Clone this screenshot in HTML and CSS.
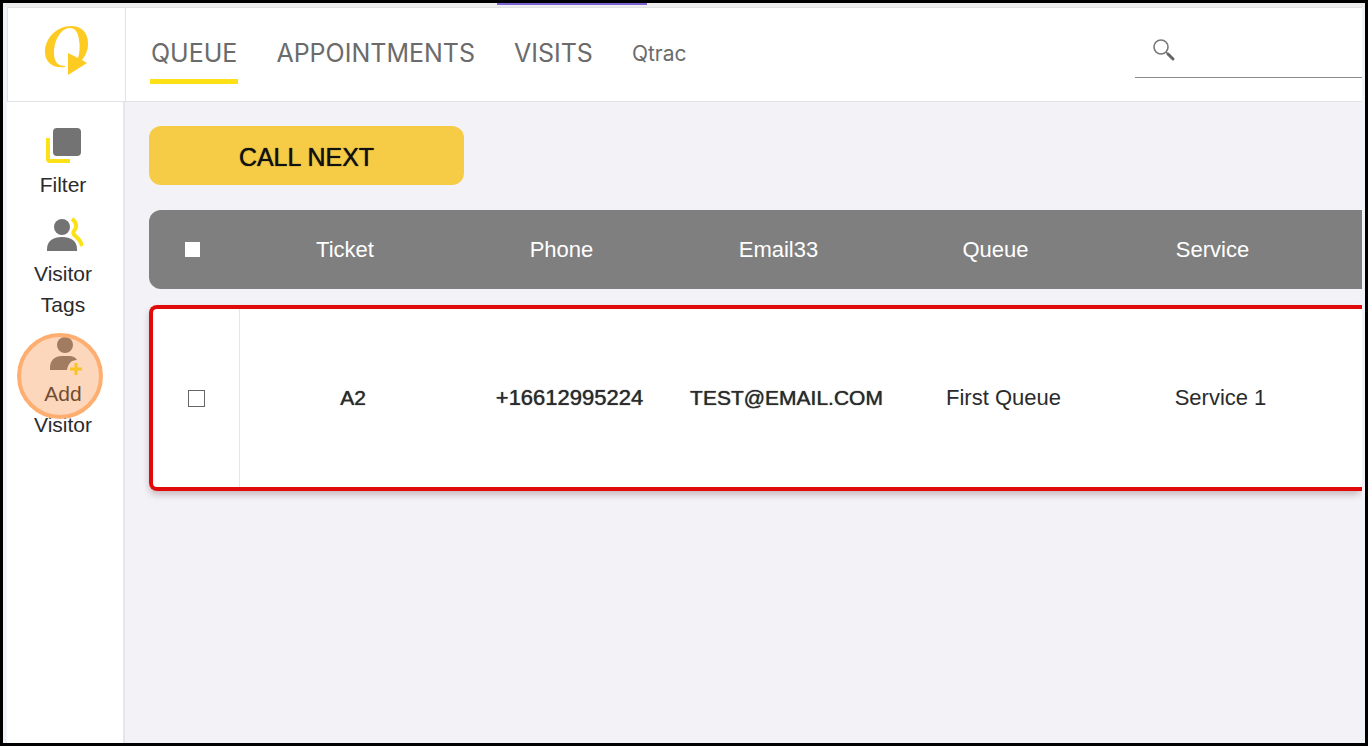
FILE: index.html
```html
<!DOCTYPE html>
<html lang="en">
<head>
    <meta charset="UTF-8">
    <meta name="viewport" content="width=device-width, initial-scale=1.0">
    <title>Queue</title>
    <link rel="stylesheet" href="styles.css">
</head>
<body>

    <div class="top-strip"><div class="tab-marker"></div></div>

    <header class="header">
        <a class="logo" href="#" aria-label="Home">
            <svg width="46" height="52" viewBox="0 0 46 52">
                <path fill="#fdcb22" d="M21 42C9 44 1 37 1 27C1 13 13 1 27 1C38 1 44 8 44 18C44 25 42 30 38 35L43 38L24 50V28L34 33C36 27 36 20 35 15C34 7 31 3 26 3C17 3 10 15 10 28C10 37 14 41 21 41Z"/>
            </svg>
        </a>
        <nav class="nav">
            <a class="nav-link active" href="#">QUEUE</a>
            <a class="nav-link" href="#">APPOINTMENTS</a>
            <a class="nav-link" href="#">VISITS</a>
            <a class="nav-link small" href="#">Qtrac</a>
        </nav>
        <form class="search">
            <svg width="24" height="24" viewBox="0 0 24 24">
                <circle cx="9" cy="9" r="7" fill="none" stroke="#777" stroke-width="1.6"/>
                <path d="M14 14L16 16" stroke="#777" stroke-width="1.5"/>
                <path d="M16 16L21 21" stroke="#666" stroke-width="3" stroke-linecap="round"/>
            </svg>
            <input type="search" aria-label="Search">
        </form>
    </header>

    <div class="page">
        <aside class="sidebar">
            <a class="side-item" href="#">
                <svg width="40" height="42" viewBox="0 0 40 42">
                    <path d="M5 11V32Q5 34 7 34H27" fill="none" stroke="#fbe116" stroke-width="4"/>
                    <rect x="10" y="1" width="28" height="28" rx="4" fill="#737373"/>
                </svg>
                <span>Filter</span>
            </a>
            <a class="side-item" href="#">
                <svg width="40" height="42" viewBox="0 0 40 42">
                    <path d="M29 3C34 6 34 12 31 15C28 20 37 20 39 30" fill="none" stroke="#fbe116" stroke-width="4"/>
                    <circle cx="19" cy="11" r="8" fill="#737373"/>
                    <path d="M4 35V33C4 25 10 21 19 21S34 25 34 33V35Z" fill="#737373"/>
                </svg>
                <span>Visitor Tags</span>
            </a>
            <a class="side-item" href="#">
                <svg width="40" height="42" viewBox="0 0 40 42">
                    <circle cx="22" cy="9" r="8" fill="#737373"/>
                    <path d="M7 34V32C7 24 12 20 19 20H26C30 20 32 21 34 24C28 24 25 28 24 34Z" fill="#737373"/>
                    <path d="M33 27V39M27 33H39" stroke="#fbe116" stroke-width="3"/>
                </svg>
                <span>Add Visitor</span>
                <i class="highlight"></i>
            </a>
        </aside>

        <main class="content">
            <button class="call-next" type="button">CALL NEXT</button>

            <table class="queue-table">
                <colgroup>
                    <col class="col-check">
                    <col class="col-ticket">
                    <col class="col-data">
                    <col class="col-data">
                    <col class="col-data">
                    <col class="col-data">
                    <col>
                </colgroup>
                <thead>
                    <tr>
                        <th class="check"><input type="checkbox" aria-label="Select all"></th>
                        <th class="ticket">Ticket</th>
                        <th>Phone</th>
                        <th>Email33</th>
                        <th>Queue</th>
                        <th>Service</th>
                        <th></th>
                    </tr>
                </thead>
                <tbody>
                    <tr>
                        <td class="check"><input type="checkbox" aria-label="Select A2"></td>
                        <td class="ticket"><strong>A2</strong></td>
                        <td><strong class="phone">+16612995224</strong></td>
                        <td><strong>TEST@EMAIL.COM</strong></td>
                        <td>First Queue</td>
                        <td>Service 1</td>
                        <td></td>
                    </tr>
                </tbody>
            </table>
        </main>
    </div>

</body>
</html>
```

FILE: styles.css
```css
* {
    box-sizing: border-box;
}
body {
    margin: 0;
    min-height: 100vh;
    display: flex;
    flex-direction: column;
    border: 3px solid #000;
    background-color: #f0f3f9;
    font-family: "Liberation Sans", Arial, sans-serif;
    font-size: 22px;
    color: #2b2b2b;
}
a {
    color: inherit;
    text-decoration: none;
}
.top-strip {
    height: 4px;
    background-color: #eeeeee;
}
.tab-marker {
    width: 11%;
    height: 2px;
    margin-left: 36.3%;
    background-color: #7d62d6;
}

/* Header */
.header {
    display: flex;
    height: 95px;
    margin: 0 3px 0 4px;
    border: 1px solid #e2e2e6;
    border-right: none;
    background-color: #fff;
}
.logo {
    display: flex;
    align-items: center;
    justify-content: center;
    width: 118px;
    padding-bottom: 8px;
    border-right: 1px solid #e2e2e6;
}
.nav {
    display: flex;
    flex: 1;
    align-items: flex-start;
    gap: 37px;
    padding: 28px 24px 0;
}
.nav-link {
    padding: 0 1px 9px;
    border-bottom: 5px solid transparent;
    font-family: Inter, "Liberation Sans", sans-serif;
    font-size: 25px;
    line-height: 34px;
    color: #6b6b6b;
}
.nav-link.active {
    border-bottom-color: #fbe116;
}
.nav-link.small {
    font-size: 21px;
    line-height: 36px;
}
.search {
    display: flex;
    align-items: center;
    width: 227px;
    height: 70px;
    padding: 14px 0 0 17px;
    border-bottom: 1px solid #8a8a8a;
}
.search input {
    flex: 1;
    min-width: 0;
    border: none;
    outline: none;
    background: none;
    font: inherit;
}

/* Page */
.page {
    display: flex;
    flex: 1;
    margin: 0 3px 0 4px;
    background-color: #f2f2f7;
}
.sidebar {
    display: flex;
    flex-direction: column;
    gap: 16px;
    flex: 0 0 118px;
    padding: 25px 24px 0 20px;
    border-right: 2px solid #e6e6ea;
    background-color: #fff;
}
.side-item {
    position: relative;
    display: flex;
    flex-direction: column;
    align-items: center;
    font-size: 21px;
    line-height: 31px;
    text-align: center;
}
.highlight {
    position: absolute;
    top: -3px;
    left: -10px;
    width: 86px;
    height: 86px;
    border: 4px solid #fdae70;
    border-radius: 50%;
    background-color: rgba(247, 140, 62, 0.35);
}
.content {
    flex: 1;
    min-width: 0;
    padding: 24px 0 0 24px;
    overflow: hidden;
}
.call-next {
    display: block;
    width: 315px;
    height: 59px;
    margin-bottom: 9px;
    padding: 3px 0 0;
    border: none;
    border-radius: 12px;
    background-color: #f6cc46;
    font-family: inherit;
    font-size: 25px;
    color: #111;
    text-shadow: 0 0 1px #111;
    cursor: pointer;
}

/* Table */
.queue-table {
    width: 100%;
    table-layout: fixed;
    border-collapse: separate;
    border-spacing: 0 16px;
}
.col-check {
    width: 90px;
}
.col-ticket {
    width: 222px;
}
.col-data {
    width: 217px;
}
.queue-table th {
    height: 79px;
    padding: 0 16px 0 0;
    background-color: #7f7f7f;
    font-weight: normal;
    color: #fff;
}
.queue-table th:first-child {
    border-radius: 12px 0 0 12px;
}
.queue-table tbody tr {
    border-radius: 8px;
    box-shadow: 0 4px 6px rgba(90, 30, 30, 0.25);
}
.queue-table td {
    height: 186px;
    padding: 0;
    border-top: 4px solid #e00a0a;
    border-bottom: 4px solid #e00a0a;
    background-color: #fff;
    text-align: center;
}
.queue-table td:first-child {
    border-left: 4px solid #e00a0a;
    border-radius: 8px 0 0 8px;
}
.queue-table .ticket {
    padding-left: 6px;
}
.queue-table td.ticket {
    background-image: linear-gradient(#e6e6e6, #e6e6e6);
    background-repeat: no-repeat;
    background-size: 1px 100%;
}
.queue-table th.check {
    padding-right: 4px;
}
.queue-table strong {
    font-size: 21px;
    font-weight: normal;
    text-shadow: 0 0 1px #2b2b2b;
}
.queue-table .phone {
    font-size: 22px;
}
.queue-table input {
    appearance: none;
    display: block;
    width: 17px;
    height: 17px;
    margin: 0 auto;
    border: 1px solid #666;
    background-color: #fff;
}
.queue-table th input {
    border-color: #7f7f7f;
}
```
